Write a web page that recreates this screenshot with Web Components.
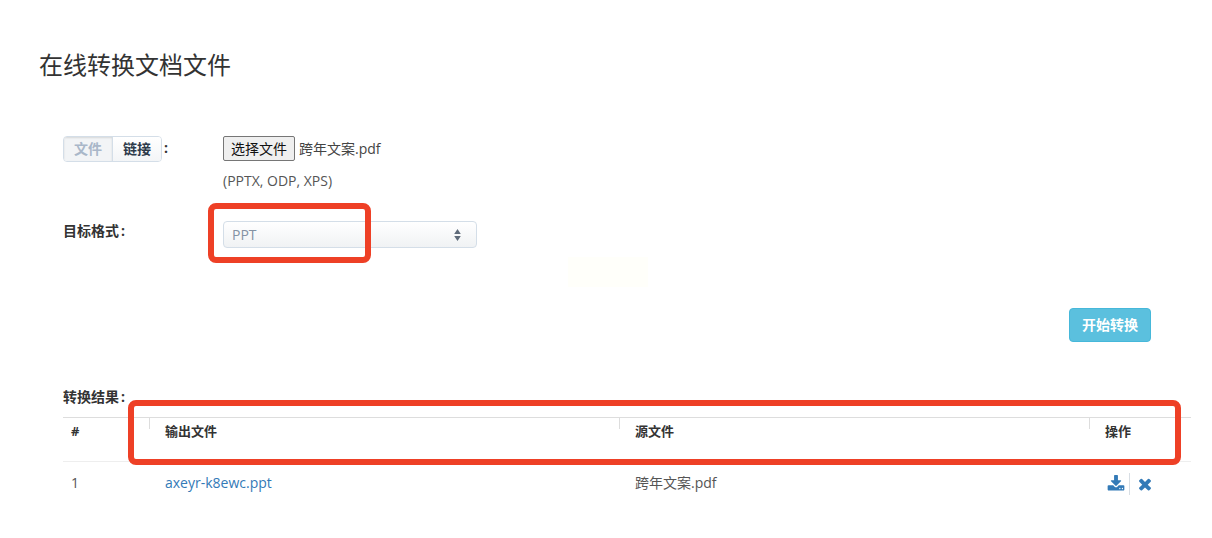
<!DOCTYPE html>
<html lang="zh">
<head>
<meta charset="utf-8">
<title>在线转换文档文件</title>
<style>
  html, body { margin: 0; padding: 0; background: #fff; }
  body { font: 14px/20px "Open Sans", "Noto Sans CJK SC", sans-serif; color: #333; }
</style>
</head>
<body>
<convert-page>
  <page-title>在线转换文档文件</page-title>
  <form-row>
    <source-tabs slot="label"></source-tabs>
    <file-picker filename="跨年文案.pdf" hint="(PPTX, ODP, XPS)"></file-picker>
  </form-row>
  <form-row>
    <span slot="label">目标格式<span style="margin-left:2px">:</span></span>
    <format-select value="PPT"></format-select>
  </form-row>
  <submit-bar>开始转换</submit-bar>
  <result-table></result-table>
</convert-page>

<script>
class ConvertPage extends HTMLElement {
  connectedCallback() {
    this.attachShadow({ mode: 'open' });
    this.shadowRoot.innerHTML = `
      <style>
        :host { display: block; position: relative; height: 538px; overflow: hidden; box-sizing: border-box; padding: 47px 21px 0 39px; }
        .marker { position: absolute; border: 6px solid #ee4026; border-radius: 8px; box-sizing: border-box; }
        .m1 { left: 208px; top: 203px; width: 163px; height: 60px; }
        .m2 { left: 128px; top: 400px; width: 1053px; height: 65px; }
        .glow { position: absolute; left: 568px; top: 257px; width: 80px; height: 30px; background: #fffffa; }
      </style>
      <slot></slot>
      <div class="glow"></div>
      <div class="marker m1"></div>
      <div class="marker m2"></div>
    `;
  }
}

class PageTitle extends HTMLElement {
  connectedCallback() {
    this.attachShadow({ mode: 'open' });
    this.shadowRoot.innerHTML = `
      <style>
        :host { display: block; font-size: 24px; line-height: 36px; color: #333; margin-bottom: 53px; }
      </style>
      <slot></slot>
    `;
  }
}

class FormRow extends HTMLElement {
  connectedCallback() {
    this.attachShadow({ mode: 'open' });
    this.shadowRoot.innerHTML = `
      <style>
        :host { display: flex; padding-left: 24px; margin-bottom: 30px; }
        .label { width: 160px; flex: none; font-size: 14px; font-weight: 700; color: #333; }
      </style>
      <div class="label"><slot name="label"></slot></div>
      <div class="field"><slot></slot></div>
    `;
  }
}

class SourceTabs extends HTMLElement {
  connectedCallback() {
    this.attachShadow({ mode: 'open' });
    this.shadowRoot.innerHTML = `
      <style>
        :host { display: flex; align-items: flex-start; gap: 2px; font-size: 14px; font-weight: 700; }
        .group { display: flex; height: 26px; box-sizing: border-box; border: 1px solid #d4dee8; border-radius: 4px; line-height: 24px; overflow: hidden; }
        .tab { padding: 0 10px; color: #a9b7c9; background: #f2f4f6; box-shadow: inset 0 1px 2px rgba(0,0,0,.12); border-right: 1px solid #d4dee8; }
        .tab + .tab { padding: 0 10px; border: 0; color: #2d3a4a; background: linear-gradient(#fff, #f3f5f7); box-shadow: none; }
        .colon { line-height: 24px; color: #333; }
      </style>
      <div class="group"><div class="tab">文件</div><div class="tab">链接</div></div>
      <div class="colon">:</div>
    `;
  }
}

class FilePicker extends HTMLElement {
  connectedCallback() {
    const name = this.getAttribute('filename');
    const hint = this.getAttribute('hint');
    this.attachShadow({ mode: 'open' });
    this.shadowRoot.innerHTML = `
      <style>
        :host { display: block; font-size: 14px; color: #444; }
        .line { display: flex; align-items: center; gap: 4px; height: 25px; }
        .btn { box-sizing: border-box; height: 25px; padding: 0 7px; border: 1px solid #767676; border-radius: 2px; background: #efefef; color: #111; line-height: 23px; }
        .hint { margin-top: 10px; line-height: 20px; color: #555; }
      </style>
      <div class="line"><div class="btn">选择文件</div><span>${name}</span></div>
      <div class="hint">${hint}</div>
    `;
  }
}

class FormatSelect extends HTMLElement {
  connectedCallback() {
    this.attachShadow({ mode: 'open' });
    this.shadowRoot.innerHTML = `
      <style>
        :host { display: flex; align-items: center; justify-content: space-between; box-sizing: border-box; width: 254px; height: 27px; padding: 0 15px 0 8px; border: 1px solid #d4dee8; border-radius: 4px; background: linear-gradient(#fff, #f0f2f4); color: #8492a3; font-size: 14px; }
        svg { display: block; }
      </style>
      <span>${this.getAttribute('value')}</span>
      <svg width="7" height="12" viewBox="0 0 7 12"><path d="M3.500 0 6.800 5H.2zM3.500 12 .2 7h6.600z" fill="#5f6b7a"/></svg>
    `;
  }
}

class SubmitBar extends HTMLElement {
  connectedCallback() {
    this.attachShadow({ mode: 'open' });
    this.shadowRoot.innerHTML = `
      <style>
        :host { display: flex; justify-content: flex-end; padding-right: 40px; margin-top: 60px; }
        button { box-sizing: border-box; width: 82px; height: 34px; padding: 0; border: 1px solid #46b8da; border-radius: 4px; background: #5bc0de; color: #fff; font: 700 14px/20px "Open Sans", "Noto Sans CJK SC", sans-serif; }
      </style>
      <button type="button"><slot></slot></button>
    `;
  }
}

class ResultTable extends HTMLElement {
  connectedCallback() {
    this.attachShadow({ mode: 'open' });
    this.shadowRoot.innerHTML = `
      <style>
        :host { display: block; margin: 41px 0 0 24px; font-size: 14px; }
        .caption { font-weight: 700; height: 34px; line-height: 28px; color: #333; }
        .caption span { margin-left: 2px; }
        .row { display: grid; grid-template-columns: 86px 470px 470px 1fr; }
        .head { height: 45px; box-sizing: border-box; border-top: 1px solid #ddd; border-bottom: 1px solid #eee; font-weight: 700; font-size: 13px; line-height: 24px; color: #333; }
        .cell { position: relative; padding-left: 16px; }
        .cell.first { padding-left: 8px; }
        .head .cell { padding-top: 1px; }
        .head .cell:not(.first)::before { content: ""; position: absolute; left: 0; top: 0; width: 1px; height: 11px; background: #ddd; }
        .body { font-size: 14px; line-height: 41px; color: #555; }
        a { color: #337ab7; text-decoration: none; }
        .cell.ops { display: flex; align-items: center; height: 43px; padding-left: 18px; }
        .ops svg { display: block; width: 18px; height: 18px; fill: #337ab7; }
        .sep { width: 1px; height: 22px; margin: 0 6px 0 4px; background: #d8dee4; }
      </style>
      <div class="caption">转换结果<span>:</span></div>
      <div class="row head">
        <div class="cell first">#</div>
        <div class="cell">输出文件</div>
        <div class="cell">源文件</div>
        <div class="cell">操作</div>
      </div>
      <div class="row body">
        <div class="cell first">1</div>
        <div class="cell"><a href="#">axeyr-k8ewc.ppt</a></div>
        <div class="cell">跨年文案.pdf</div>
        <div class="cell ops">
          <svg viewBox="0 0 1792 1792"><path d="M1344 1344q0-26-19-45t-45-19-45 19-19 45 19 45 45 19 45-19 19-45zm256 0q0-26-19-45t-45-19-45 19-19 45 19 45 45 19 45-19 19-45zm128-224v320q0 40-28 68t-68 28h-1472q-40 0-68-28t-28-68v-320q0-40 28-68t68-28h465l135 136q58 56 136 56t136-56l136-136h464q40 0 68 28t28 68zm-325-569q17 41-14 70l-448 448q-18 19-45 19t-45-19l-448-448q-31-29-14-70 17-39 59-39h256v-448q0-26 19-45t45-19h256q26 0 45 19t19 45v448h256q42 0 59 39z"/></svg>
          <div class="sep"></div>
          <svg viewBox="0 0 1792 1792"><path d="M1490 1322q0 40-28 68l-136 136q-28 28-68 28t-68-28l-294-294-294 294q-28 28-68 28t-68-28l-136-136q-28-28-28-68t28-68l294-294-294-294q-28-28-28-68t28-68l136-136q28-28 68-28t68 28l294 294 294-294q28-28 68-28t68 28l136 136q28 28 28 68t-28 68l-294 294 294 294q28 28 28 68z"/></svg>
        </div>
      </div>
    `;
  }
}

customElements.define('convert-page', ConvertPage);
customElements.define('page-title', PageTitle);
customElements.define('form-row', FormRow);
customElements.define('source-tabs', SourceTabs);
customElements.define('file-picker', FilePicker);
customElements.define('format-select', FormatSelect);
customElements.define('submit-bar', SubmitBar);
customElements.define('result-table', ResultTable);
</script>
</body>
</html>
